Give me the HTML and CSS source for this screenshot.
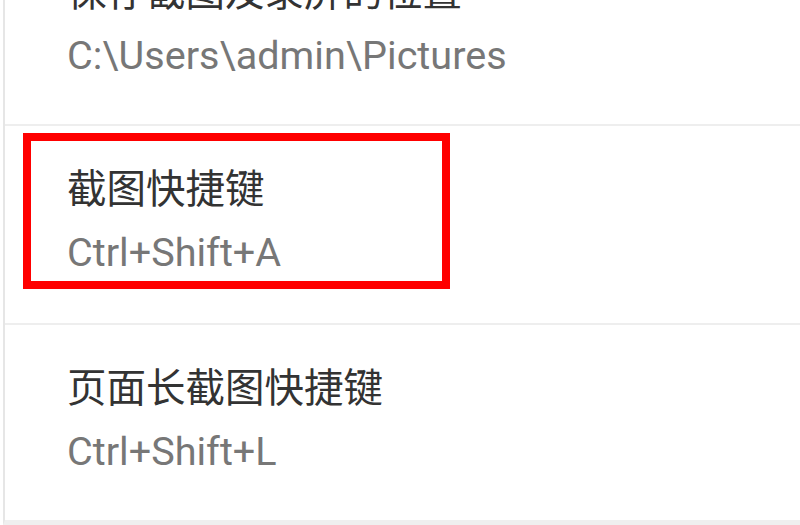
FILE: index.html
```html
<!DOCTYPE html>
<html>
<head>
    <meta charset="utf-8">
    <title>设置</title>
    <link rel="stylesheet" href="styles.css">
</head>
<body>
    <div class="panel">
        <div class="row first">
            <div class="title">保存截图及录屏的位置</div>
            <div class="value">C:\Users\admin\Pictures</div>
        </div>
        <div class="row marked-row">
            <div class="title">截图快捷键</div>
            <div class="value">Ctrl+Shift+A</div>
            <div class="mark"></div>
        </div>
        <div class="row">
            <div class="title">页面长截图快捷键</div>
            <div class="value">Ctrl+Shift+L</div>
        </div>
    </div>
</body>
</html>
```

FILE: styles.css
```css
html, body {
    margin: 0;
    padding: 0;
    background-color: #fff;
    overflow: hidden;
}
body {
    font-family: Roboto, "Noto Sans CJK SC", sans-serif;
}
.panel {
    height: 520px;
    margin-left: 3px;
    border-left: 2px solid #e6e6e6;
    border-bottom: 5px solid #efefef;
    overflow: hidden;
}
.row {
    padding: 32px 0 37px 62px;
    border-bottom: 2px solid #eeeeee;
}
.row.first {
    margin-top: -71px;
}
.title {
    font-size: 39.5px;
    line-height: 64px;
    color: #333;
}
.value {
    font-size: 39.6px;
    line-height: 62px;
    color: #777;
}
.marked-row {
    position: relative;
    padding-bottom: 39px;
}
/* red annotation box drawn over the shortcut setting */
.mark {
    position: absolute;
    left: 18px;
    top: 7px;
    width: 427px;
    height: 156px;
    box-sizing: border-box;
    border: 8px solid #ff0000;
}
```
